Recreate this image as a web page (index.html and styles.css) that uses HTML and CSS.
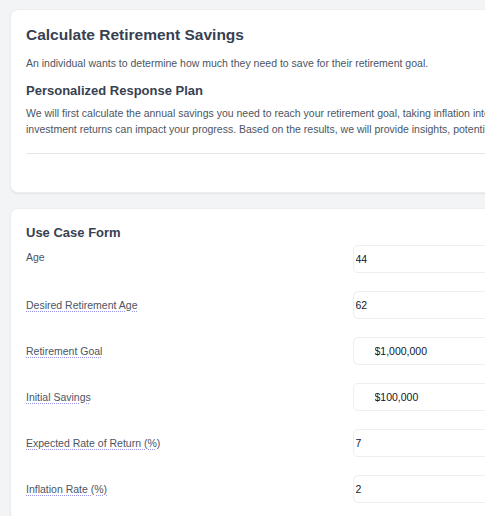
FILE: index.html
```html
<!DOCTYPE html>
<html lang="en">
<head>
<meta charset="utf-8">
<title>Calculate Retirement Savings</title>
<link rel="stylesheet" href="styles.css">
</head>
<body>
<main class="page">
  <section class="card intro">
    <h1 class="title">Calculate Retirement Savings</h1>
    <p class="desc">An individual wants to determine how much they need to save for their retirement goal.</p>
    <h2 class="subtitle">Personalized Response Plan</h2>
    <p class="plan">We will first calculate the annual savings you need to reach your retirement goal, taking inflation into account, and we will also analyze how investment returns can impact your progress. Based on the results, we will provide insights, potential adjustments.</p>
    <hr class="divider">
  </section>

  <section class="card form-card">
    <h2 class="subtitle">Use Case Form</h2>
    <form class="form">
      <div class="row">
        <label class="label plain" for="age">Age</label>
        <input class="field" id="age" type="text" value="44">
      </div>
      <div class="row">
        <label class="label" for="ret-age">Desired Retirement Age</label>
        <input class="field" id="ret-age" type="text" value="62">
      </div>
      <div class="row">
        <label class="label" for="goal">Retirement Goal</label>
        <input class="field money" id="goal" type="text" value="$1,000,000">
      </div>
      <div class="row">
        <label class="label" for="savings">Initial Savings</label>
        <input class="field money" id="savings" type="text" value="$100,000">
      </div>
      <div class="row">
        <label class="label" for="rate">Expected Rate of Return (%)</label>
        <input class="field" id="rate" type="text" value="7">
      </div>
      <div class="row">
        <label class="label" for="inflation">Inflation Rate (%)</label>
        <input class="field" id="inflation" type="text" value="2">
      </div>
    </form>
  </section>
</main>
</body>
</html>
```

FILE: styles.css
```css
html {
  overflow: hidden;
}

body {
  margin: 0;
  background: #f3f4f6;
  font-family: "Liberation Sans", Arial, sans-serif;
  color: #4b5563;
}

.page {
  width: 686px;
  padding: 9px 0 0 10px;
  display: flex;
  flex-direction: column;
  gap: 15px;
}

.card {
  background: #ffffff;
  border-radius: 8px;
  box-shadow: 0 1px 2px rgba(0, 0, 0, 0.07);
  border: 1px solid #eceef1;
  padding: 15px 16px 16px 15px;
}

.title {
  margin: 0;
  font-size: 15.5px;
  line-height: 20px;
  font-weight: 700;
  color: #374151;
}

.desc {
  margin: 10px 0 0;
  font-size: 10.5px;
  line-height: 16px;
}

.subtitle {
  margin: 0;
  font-size: 13px;
  line-height: 18px;
  font-weight: 700;
  color: #374151;
}

.intro .subtitle {
  margin-top: 11px;
}

.plan {
  margin: 5px 0 0;
  font-size: 10.5px;
  line-height: 16px;
}

.divider {
  margin: 16px 0 22px;
  border: 0;
  border-top: 1px solid #e5e7eb;
}

.form {
  margin-top: 3px;
  display: flex;
  flex-direction: column;
  gap: 18px;
}

.row {
  display: grid;
  grid-template-columns: 1fr 1fr;
  align-items: center;
}

.label {
  font-size: 10.5px;
  line-height: 16px;
  color: #4b5563;
  justify-self: start;
  text-decoration: underline dotted #9a93ea;
  text-underline-offset: 2px;
}

.label.plain {
  text-decoration: none;
  align-self: start;
  margin-top: 4px;
}

.field {
  box-sizing: border-box;
  height: 28px;
  margin: 0;
  padding: 0 8px 0 2px;
  border: 1px solid #eceef1;
  border-radius: 5px;
  background: #ffffff;
  font-family: "Liberation Sans", Arial, sans-serif;
  font-size: 10.5px;
  color: #111827;
  outline: none;
}

.field.money {
  padding-left: 21px;
}
```
